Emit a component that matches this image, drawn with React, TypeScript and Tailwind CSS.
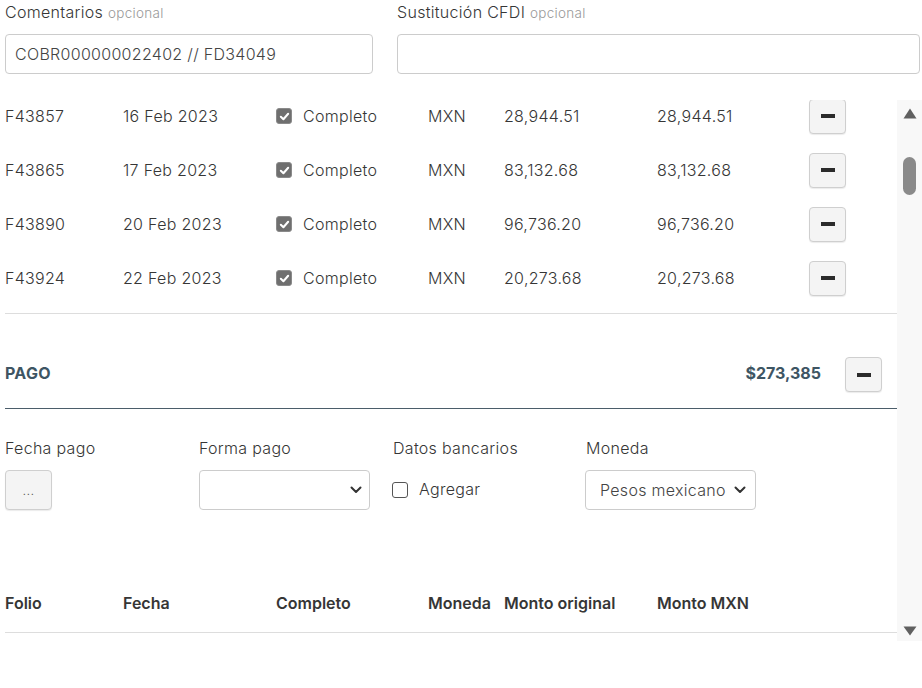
import React from "react";

const rows = [
  ["F43857", "16 Feb 2023", "28,944.51"],
  ["F43865", "17 Feb 2023", "83,132.68"],
  ["F43890", "20 Feb 2023", "96,736.20"],
  ["F43924", "22 Feb 2023", "20,273.68"],
];

function MinusBtn() {
  return (
    <div className="w-[37px] h-[35px] rounded-[4px] border border-[#cfcfcf] bg-[#f4f4f4] shadow-[0_1px_1px_rgba(0,0,0,0.08)] flex items-center justify-center">
      <span className="block w-[14px] h-[4px] bg-[#2b2b2b]" />
    </div>
  );
}

function Checked() {
  return (
    <span className="w-[16px] h-[16px] rounded-[3px] bg-[#6f6f6f] border border-[#8a8a8a] flex items-center justify-center">
      <svg width="11" height="11" viewBox="0 0 12 12">
        <path d="M2 6.3 L4.8 9 L10 3" fill="none" stroke="#fff" strokeWidth="2.2" strokeLinecap="round" strokeLinejoin="round" />
      </svg>
    </span>
  );
}

function Chevron() {
  return (
    <svg width="12" height="8" viewBox="0 0 12 8">
      <path d="M1.5 1.5 L6 6 L10.5 1.5" fill="none" stroke="#333" strokeWidth="2" strokeLinecap="round" strokeLinejoin="round" />
    </svg>
  );
}

export default function App() {
  return (
    <div
      className="w-[922px] h-[688px] bg-white overflow-hidden text-[#363636] text-[16px] leading-[24px] font-light tracking-[0.3px]"
      style={{ fontFamily: "Inter, 'Noto Sans', sans-serif" }}
    >
      {/* top inputs */}
      <div className="flex pl-[5px] pr-[2px]">
        <div className="w-[368px]">
          <div className="mb-[9px]">
            Comentarios <span className="text-[13.5px] text-[#999]">opcional</span>
          </div>
          <div className="h-[40px] rounded-[4px] border border-[#cccccc] flex items-center px-[9px] text-[#444]">
            COBR000000022402 // FD34049
          </div>
        </div>
        <div className="ml-[24px] flex-1">
          <div className="mb-[9px]">
            Sustitución CFDI <span className="text-[13.5px] text-[#999]">opcional</span>
          </div>
          <div className="h-[40px] rounded-[4px] border border-[#cccccc]" />
        </div>
      </div>

      {/* scroll area */}
      <div className="mt-[26px] h-[541px] flex overflow-hidden">
        <div className="w-[897px] pl-[5px] overflow-hidden">
          <div className="-mt-[11px]">
            {rows.map((r) => (
              <div key={r[0]} className="h-[54px] flex items-center">
                <div className="w-[118px]">{r[0]}</div>
                <div className="w-[153px]">{r[1]}</div>
                <div className="w-[152px] flex items-center gap-[11px]">
                  <Checked />
                  <span>Completo</span>
                </div>
                <div className="w-[76px]">MXN</div>
                <div className="w-[153px]">{r[2]}</div>
                <div className="w-[152px]">{r[2]}</div>
                <MinusBtn />
              </div>
            ))}
            <div className="mt-[8px] border-t border-[#dddddd]" />
            <div className="pt-[43px] pb-[16px] border-b border-[#4b5d6a] flex items-center">
              <div className="flex-1 mb-[4px] font-bold text-[#3e5563] tracking-[0.3px]">PAGO</div>
              <div className="font-bold mb-[4px] text-[#3e5563] mr-[24px] tracking-[0px]">$273,385</div>
              <div className="mr-[15px]">
                <MinusBtn />
              </div>
            </div>

            <div className="mt-[27px] flex">
              <div className="w-[194px]">
                <div className="mb-[10px]">Fecha pago</div>
                <div className="w-[47px] h-[40px] rounded-[4px] border border-[#cfcfcf] bg-[#f4f4f4] shadow-[0_1px_1px_rgba(0,0,0,0.08)] flex items-center justify-center text-[13px] text-[#444]">
                  ...
                </div>
              </div>
              <div className="w-[194px]">
                <div className="mb-[10px]">Forma pago</div>
                <div className="w-[171px] h-[40px] rounded-[4px] border border-[#cccccc] flex items-center justify-end pr-[7px]">
                  <Chevron />
                </div>
              </div>
              <div className="w-[193px]">
                <div className="mb-[10px]">Datos bancarios</div>
                <div className="h-[40px] flex items-center gap-[11px] -ml-[1px]">
                  <span className="w-[16px] h-[16px] rounded-[3px] border border-[#555] bg-white" />
                  <span className="-mt-[2px]">Agregar</span>
                </div>
              </div>
              <div className="w-[194px]">
                <div className="mb-[10px]">Moneda</div>
                <div className="-ml-[1px] w-[171px] h-[40px] rounded-[4px] border border-[#cccccc] flex items-center justify-between pl-[14px] pr-[9px] text-[#444]">
                  <span>Pesos mexicano</span>
                  <Chevron />
                </div>
              </div>
            </div>

            <div className="mt-[81px] pb-[17px] border-b border-[#dddddd] flex font-semibold tracking-[0px]">
              <div className="w-[118px]">Folio</div>
              <div className="w-[153px]">Fecha</div>
              <div className="w-[152px]">Completo</div>
              <div className="w-[76px]">Moneda</div>
              <div className="w-[153px]">Monto original</div>
              <div className="w-[152px]">Monto MXN</div>
            </div>
          </div>
        </div>
        {/* scrollbar */}
        <div className="w-[25px] bg-[#f8f8f8] flex flex-col items-center pt-[8px] pb-[5px]">
          <svg width="14" height="11" viewBox="0 0 14 11">
            <path d="M7 0.5 L13.5 10.5 L0.5 10.5 Z" fill="#606060" />
          </svg>
          <div className="mt-[38px] w-[13px] h-[38px] rounded-full bg-[#8a8a8a]" />
          <div className="flex-1" />
          <svg width="14" height="10" viewBox="0 0 14 10">
            <path d="M0.5 0.5 L13.5 0.5 L7 9.5 Z" fill="#606060" />
          </svg>
        </div>
      </div>
    </div>
  );
}
